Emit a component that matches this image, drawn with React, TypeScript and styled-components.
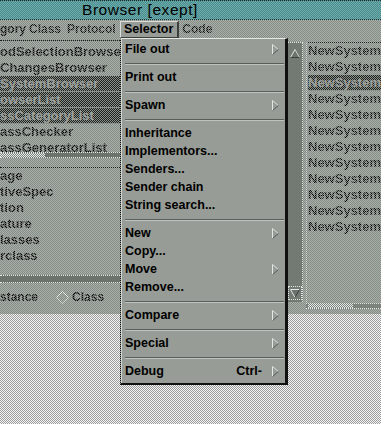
import React from 'react';
import styled, { createGlobalStyle, css } from 'styled-components';

// 1px checkerboard, the way the X server dithers its greys
const checker = (a: string, b: string) => css`
  background-color: ${a};
  background-image: repeating-conic-gradient(${a} 0% 25%, ${b} 0% 50%);
  background-size: 2px 2px;
`;

// stippled text (the bitmap font is drawn through a 50% pattern)
const stipple = css`
  color: transparent;
  background-image: repeating-conic-gradient(#000 0% 25%, rgba(0, 0, 0, 0.22) 0% 50%);
  background-size: 2px 2px;
  -webkit-background-clip: text;
  background-clip: text;
`;

const GlobalStyle = createGlobalStyle`
  html, body {
    margin: 0;
    padding: 0;
  }
  body {
    width: 381px;
    height: 424px;
    overflow: hidden;
    font-family: 'Liberation Sans', Arial, sans-serif;
    ${checker('#f4f4f4', '#9c9c9c')}
  }
`;

interface Entry {
  label?: string;
  sub?: boolean;
  accel?: string;
  sep?: boolean;
}

const MENU: Entry[] = [
  { label: 'File out', sub: true },
  { sep: true },
  { label: 'Print out' },
  { sep: true },
  { label: 'Spawn', sub: true },
  { sep: true },
  { label: 'Inheritance' },
  { label: 'Implementors...' },
  { label: 'Senders...' },
  { label: 'Sender chain' },
  { label: 'String search...' },
  { sep: true },
  { label: 'New', sub: true },
  { label: 'Copy...' },
  { label: 'Move', sub: true },
  { label: 'Remove...' },
  { sep: true },
  { label: 'Compare', sub: true },
  { sep: true },
  { label: 'Special', sub: true },
  { sep: true },
  { label: 'Debug', accel: 'Ctrl-', sub: true },
];

const UPPER = [
  'odSelectionBrowser',
  'ChangesBrowser',
  'SystemBrowser',
  'owserList',
  'ssCategoryList',
  'assChecker',
  'assGeneratorList',
];
const UPPER_SELECTED = [2, 3, 4];

const LOWER = ['age', 'tiveSpec', 'tion', 'ature', 'lasses', 'rclass'];

const RIGHT_ROWS = 12;
const RIGHT_SELECTED = 2;

const Window = styled.div`
  position: relative;
  width: 381px;
  height: 314px;
  display: flex;
  flex-direction: column;
  ${checker('#a9afa9', '#858b85')}
`;

const TitleBar = styled.div`
  height: 18px;
  border-top: 1px dotted #1c2c2c;
  border-bottom: 1px dotted #1c2c2c;
  display: flex;
  align-items: center;
  padding-left: 82px;
  ${checker('#6cacac', '#4c8c8c')}
`;

const TitleText = styled.span`
  font-size: 15.5px;
  letter-spacing: 0.55px;
  line-height: 18px;
  color: #000;
`;

const MenuBar = styled.div`
  height: 18px;
  display: flex;
  align-items: flex-start;
`;

const MenuTitle = styled.div<{ $w: number }>`
  width: ${p => p.$w}px;
  flex: none;
  height: 18px;
  line-height: 18px;
  font-size: 12px;
  font-weight: 700;
  white-space: nowrap;
  overflow: hidden;
  span {
    ${stipple}
  }
`;

const SelectorButton = styled.div`
  margin-top: 1px;
  width: 53px;
  height: 15px;
  flex: none;
  background: #989c96;
  border-top: 1px solid #dce0dc;
  border-left: 1px solid #dce0dc;
  border-right: 2px solid #3c403c;
  border-bottom: 1px solid #3c403c;
  padding-left: 3px;
  font-size: 12.5px;
  font-weight: 700;
  line-height: 15px;
  color: #000;
`;

const Body = styled.div`
  flex: 1;
  display: flex;
`;

const LeftPane = styled.div`
  width: 120px;
  flex: none;
  padding-top: 2px;
  display: flex;
  flex-direction: column;
`;

const ListBox = styled.div<{ $h: number; $pad: number }>`
  height: ${p => p.$h}px;
  box-sizing: border-box;
  border-top: 1px dotted #1c1c1c;
  padding-top: ${p => p.$pad}px;
  overflow: hidden;
`;

const ListRow = styled.div<{ $selected?: boolean }>`
  height: 16px;
  line-height: 16px;
  font-size: 13px;
  font-weight: 700;
  white-space: nowrap;
  overflow: hidden;
  ${p =>
    p.$selected &&
    css`
      ${checker('#1e201e', '#8a908a')}
      box-shadow: inset 0 -1px 0 #8a908a;
    `}
`;

const RowText = styled.span<{ $selected?: boolean }>`
  ${p =>
    p.$selected
      ? css`
          color: #9ca09c;
        `
      : stipple}
`;

const HScroll = styled.div<{ $h: number }>`
  height: ${p => p.$h}px;
  box-sizing: border-box;
  flex: none;
  border-top: 1px dotted #e4e8e4;
  border-bottom: 1px dotted #e4e8e4;
  background: #6c726c;
  display: flex;
  align-items: stretch;
`;

const ScrollThumb = styled.div<{ $w: number; $x: number }>`
  width: ${p => p.$w}px;
  margin-left: ${p => p.$x}px;
  ${checker('#e8ece8', '#7c827c')}
`;

const Spacer = styled.div<{ $h: number }>`
  height: ${p => p.$h}px;
  flex: none;
`;

const RadioRow = styled.div`
  flex: 1;
  display: flex;
  align-items: center;
  padding-bottom: 3px;
  font-size: 12px;
  font-weight: 700;
  span {
    ${stipple}
  }
`;

const RadioGap = styled.div`
  width: 18px;
`;

const Diamond = styled.svg`
  display: block;
  margin-right: 3px;
`;

const MiddlePane = styled.div`
  width: 168px;
  flex: none;
`;

const RightPane = styled.div`
  flex: 1;
  padding: 4px 0 5px 0;
  display: grid;
  grid-template-columns: 15px 1fr;
  grid-template-rows: 1fr 7px;
`;

const VScroll = styled.div`
  grid-row: 1 / 2;
  grid-column: 1 / 2;
  background: #737973;
  border-right: 1px dotted #e4e8e4;
  border-top: 1px dotted #e4e8e4;
  display: flex;
  flex-direction: column;
  justify-content: space-between;
  align-items: center;
  padding: 4px 0 2px;
`;

const ArrowBox = styled.div<{ $boxed?: boolean }>`
  width: 12px;
  height: 12px;
  display: flex;
  align-items: center;
  justify-content: center;
  ${p =>
    p.$boxed &&
    css`
      border: 1px dotted #e4e8e4;
    `}
`;

const RightList = styled.div`
  grid-row: 1 / 2;
  grid-column: 2 / 3;
  margin-left: 3px;
  border-left: 1px dotted #d8dcd8;
  border-top: 1px dotted #1c1c1c;
  padding-left: 1px;
  overflow: hidden;
`;

const RightHScroll = styled.div`
  grid-row: 2 / 3;
  grid-column: 2 / 3;
  margin: 1px 0 0 3px;
  display: flex;
  border-top: 1px dotted #e4e8e4;
  border-bottom: 1px dotted #e4e8e4;
  background: #7c827c;
`;

const PullDown = styled.div`
  position: absolute;
  left: 120px;
  top: 38px;
  width: 168px;
  box-sizing: border-box;
  background: #989c96;
  border-left: 1px dotted #101010;
  border-top: 1px solid #e4e8e4;
  border-right: 3px solid #101010;
  border-bottom: 2px solid #101010;
  box-shadow: inset 1px 0 0 #d4d8d4;
  padding: 1px 0 3px 0;
`;

const MenuItem = styled.div`
  height: 18px;
  display: flex;
  align-items: center;
  padding: 0 6px 0 4px;
  font-size: 12.5px;
  font-weight: 700;
  color: #000;
  white-space: nowrap;
`;

const MenuLabel = styled.span`
  flex: 1;
`;

const Accel = styled.span`
  margin-right: 10px;
`;

const Separator = styled.div`
  height: 10px;
  display: flex;
  align-items: center;
  padding: 0 1px 0 4px;
  &::after {
    content: '';
    flex: 1;
    height: 1px;
    background: #5a5e5a;
    box-shadow: 0 1px 0 #c0c4c0;
  }
`;

const SubArrow = () => (
  <svg width="7" height="11" viewBox="0 0 7 11">
    <path d="M0.5 0.5 V10.5" stroke="#e4e8e4" fill="none" />
    <path d="M0.5 0.5 L6.5 5.5" stroke="#d8dcd8" fill="none" />
    <path d="M0.5 10.5 L6.5 5.5" stroke="#565a56" fill="none" />
  </svg>
);

const UpArrow = () => (
  <svg width="10" height="9" viewBox="0 0 10 9">
    <path d="M0.5 8.5 L5 0.5 L9.5 8.5 Z" fill="#6c726c" stroke="none" />
    <path d="M0.5 8.5 L5 0.5" stroke="#e4e8e4" fill="none" />
    <path d="M5 0.5 L9.5 8.5" stroke="#d0d4d0" fill="none" />
    <path d="M0.5 8.5 H9.5" stroke="#3c403c" fill="none" />
  </svg>
);

const DownArrow = () => (
  <svg width="10" height="9" viewBox="0 0 10 9">
    <path d="M0.5 0.5 L5 8.5 L9.5 0.5 Z" fill="#6c726c" stroke="none" />
    <path d="M0.5 0.5 H9.5" stroke="#e4e8e4" fill="none" />
    <path d="M0.5 0.5 L5 8.5" stroke="#e4e8e4" fill="none" />
    <path d="M5 8.5 L9.5 0.5" stroke="#3c403c" fill="none" />
  </svg>
);

const App = () => {
  return (
    <>
      <GlobalStyle />
      <Window>
        <TitleBar>
          <TitleText>Browser [exept]</TitleText>
        </TitleBar>

        <MenuBar>
          <MenuTitle $w={29}>
            <span>gory</span>
          </MenuTitle>
          <MenuTitle $w={38}>
            <span>Class</span>
          </MenuTitle>
          <MenuTitle $w={53}>
            <span>Protocol</span>
          </MenuTitle>
          <SelectorButton>Selector</SelectorButton>
          <MenuTitle $w={40}>
            <span>&nbsp;Code</span>
          </MenuTitle>
        </MenuBar>

        <Body>
          <LeftPane>
            <ListBox $h={112} $pad={3}>
              {UPPER.map((name, i) => {
                const sel = UPPER_SELECTED.includes(i);
                return (
                  <ListRow key={name} $selected={sel}>
                    <RowText $selected={sel}>{name}</RowText>
                  </ListRow>
                );
              })}
            </ListBox>
            <HScroll $h={6}>
              <ScrollThumb $w={45} $x={0} />
            </HScroll>
            <Spacer $h={9} />
            <ListBox $h={108} $pad={0}>
              {LOWER.map(name => (
                <ListRow key={name}>
                  <RowText>{name}</RowText>
                </ListRow>
              ))}
            </ListBox>
            <HScroll $h={8} />
            <RadioRow>
              <span>stance</span>
              <RadioGap />
              <Diamond width="13" height="13" viewBox="0 0 13 13">
                <path d="M0.5 6.5 L6.5 0.5 L12.5 6.5" stroke="#eef2ee" fill="none" />
                <path d="M0.5 6.5 L6.5 12.5 L12.5 6.5" stroke="#dce0dc" fill="none" />
              </Diamond>
              <span>Class</span>
            </RadioRow>
          </LeftPane>

          <MiddlePane />

          <RightPane>
            <VScroll>
              <ArrowBox>
                <UpArrow />
              </ArrowBox>
              <ArrowBox $boxed>
                <DownArrow />
              </ArrowBox>
            </VScroll>
            <RightList>
              {Array.from({ length: RIGHT_ROWS }).map((_, i) => (
                <ListRow key={i} $selected={i === RIGHT_SELECTED}>
                  <RowText $selected={i === RIGHT_SELECTED}>NewSystemBrowser</RowText>
                </ListRow>
              ))}
            </RightList>
            <RightHScroll>
              <ScrollThumb $w={45} $x={2} />
            </RightHScroll>
          </RightPane>
        </Body>

        <PullDown>
          {MENU.map((e, i) =>
            e.sep ? (
              <Separator key={i} />
            ) : (
              <MenuItem key={i}>
                <MenuLabel>{e.label}</MenuLabel>
                {e.accel && <Accel>{e.accel}</Accel>}
                {e.sub && <SubArrow />}
              </MenuItem>
            )
          )}
        </PullDown>
      </Window>
    </>
  );
};

export default App;
